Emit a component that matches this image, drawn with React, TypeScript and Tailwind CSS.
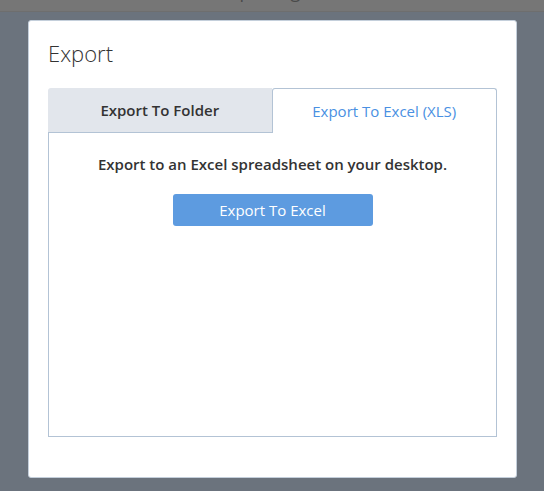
import { useState } from 'react'

const FONT = { fontFamily: '"Open Sans", "Noto Sans", sans-serif' }

export default function App() {
  const [tab, setTab] = useState<'folder' | 'excel'>('excel')

  return (
    <div className="w-[544px] h-[491px] bg-[#6b737d] overflow-hidden" style={FONT}>
      {/* Dimmed page header behind the dialog */}
      <div className="h-[12px] bg-[#767676] border-b border-[#6e6e6e] overflow-hidden">
        <div className="-mt-[21px] pl-[220px] text-[18px] text-[#4a4a4a] leading-[24px]">Exporting</div>
      </div>

      {/* Dialog */}
      <div className="ml-[28px] mt-[8px] w-[489px] h-[458px] bg-white rounded-[3px] border border-[#c4cfdb] px-[19px] pt-[17px] flex flex-col">
        <h2 className="text-[22px] font-light text-[#333] leading-[30px]">Export</h2>

        <div className="mt-[20px] flex flex-col h-[349px]">
          {/* Tabs */}
          <div className="flex h-[45px]">
            <button
              onClick={() => setTab('folder')}
              className={`flex-1 flex items-center justify-center text-[15px] font-semibold ${
                tab === 'folder'
                  ? 'bg-white text-[#4a90e2] border-t border-x border-[#b3c3d5] rounded-t-[3px]'
                  : 'bg-[#e2e6ec] text-[#333] border-b border-[#b3c3d5] rounded-tl-[3px]'
              }`}
            >
              Export To Folder
            </button>
            <button
              onClick={() => setTab('excel')}
              className={`flex-1 flex items-center justify-center text-[15px] ${
                tab === 'excel'
                  ? 'bg-white text-[#4a90e2] border-t border-x border-[#b3c3d5] rounded-t-[3px]'
                  : 'bg-[#e2e6ec] text-[#333] font-semibold border-b border-[#b3c3d5]'
              }`}
            >
              Export To Excel (XLS)
            </button>
          </div>

          {/* Panel */}
          <div className="flex-1 border-x border-b border-[#b3c3d5] flex flex-col items-center pt-[19px]">
            {tab === 'excel' ? (
              <>
                <p className="text-[15px] font-semibold text-[#333] leading-[24px]">
                  Export to an Excel spreadsheet on your desktop.
                </p>
                <button className="mt-[18px] w-[200px] h-[32px] bg-[#5d9be0] rounded-[3px] text-white text-[15px]">
                  Export To Excel
                </button>
              </>
            ) : (
              <p className="text-[15px] font-semibold text-[#333] leading-[24px]">
                Export to a folder on your computer.
              </p>
            )}
          </div>
        </div>
      </div>
    </div>
  )
}
